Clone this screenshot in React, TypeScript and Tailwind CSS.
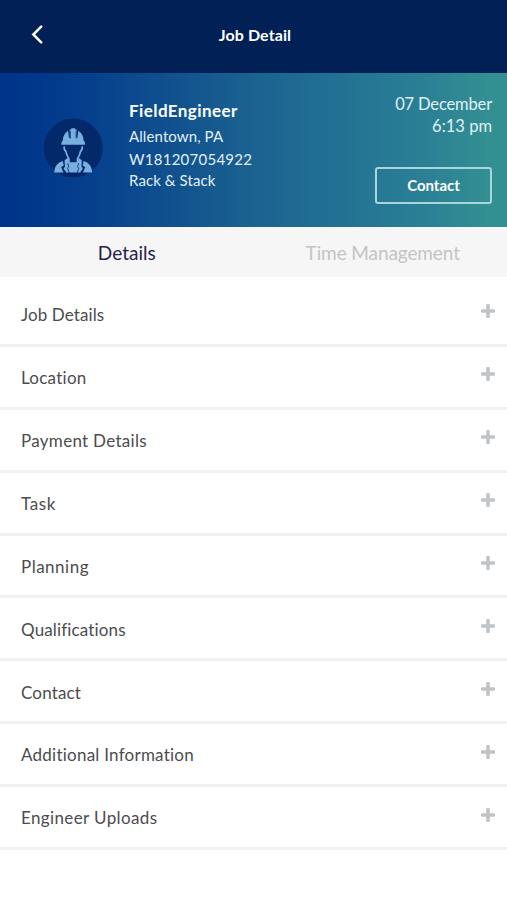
import React, { useState } from 'react';

const sections = [
  { title: 'Job Details', tracking: 'tracking-[0.1px]' },
  { title: 'Location', tracking: 'tracking-[0.25px]' },
  { title: 'Payment Details', tracking: 'tracking-[0.3px]' },
  { title: 'Task', tracking: 'tracking-[0.6px]' },
  { title: 'Planning', tracking: 'tracking-[0.5px]' },
  { title: 'Qualifications', tracking: 'tracking-[0.15px]' },
  { title: 'Contact', tracking: 'tracking-[0.15px]' },
  { title: 'Additional Information', tracking: 'tracking-[0.24px]' },
  { title: 'Engineer Uploads', tracking: 'tracking-[0.38px]' },
];

const EngineerAvatar: React.FC = () => (
  <svg className="size-[60px] shrink-0" viewBox="0 0 60 60" fill="none">
    <circle cx="30.200" cy="30" r="29.500" fill="#03296a" />
    {/* Helmet */}
    <g fill="#79afe0">
      <path d="M26.800 11.500V20h-.8l-.9-7.200c-3.300 1.900-5.100 5.200-5.300 9.700-1 .7-1.500 2-1.500 4.200h23.800c0-2.200-.5-3.500-1.500-4.200-.2-4.500-2-7.800-5.300-9.700l-.9 7.200h-.8v-8.500z" />
      <rect x="28" y="10.200" width="4.400" height="12.500" rx="1" />
    </g>
    <path d="M27.300 13v7.500M33.100 13v7.500" stroke="#03296a" strokeWidth="0.800" />
    {/* Face */}
    <path d="M21.200 28.300c-.3 2.500.3 4 1.600 4.900.5 2.900 1.600 5.300 3.100 7.600v3M39.200 28.300c.3 2.500-.3 4-1.600 4.900-.5 2.900-1.600 5.300-3.100 7.600v3" stroke="#79afe0" strokeWidth="1.700" />
    {/* Jacket and collar */}
    <g fill="#79afe0">
      <path d="M19.800 43c-5.200 1.700-8.300 5-8.500 11.500h9.200l-2.400-5.300 2.600-1.700z" />
      <path d="M40.600 43c5.200 1.700 8.300 5 8.500 11.500h-9.200l2.400-5.300-2.600-1.700z" />
      <path d="M24.300 40l2.700 4.200h6.400l2.700-4.200 2.800 2.500-.5 6 1.400 2-2.600 4h-14l-2.600-4 1.400-2-.5-6z" />
    </g>
    <path d="M24.700 45l1 3.500-1 2 1.600 4.500M35.700 45l-1 3.500 1 2-1.600 4.500" stroke="#03296a" strokeWidth="0.800" />
  </svg>
);

const PlusIcon: React.FC = () => (
  <svg className="size-3.5" viewBox="0 0 14 14" fill="#c0c4c6">
    <path d="M5.200 1q0-1 1-1h1.600q1 0 1 1v4.200H13q1 0 1 1v1.600q0 1-1 1H8.800V13q0 1-1 1H6.200q-1 0-1-1V8.800H1q-1 0-1-1V6.200q0-1 1-1h4.200z" />
  </svg>
);

const App: React.FC = () => {
  const [activeTab, setActiveTab] = useState('details');

  return (
    <div className="min-h-screen bg-white font-['Lato','Noto_Sans',sans-serif]">
      {/* Header */}
      <header className="grid h-[73px] grid-cols-[1fr_auto_1fr] items-center bg-[#002056] pb-1 pl-[31px] text-white">
        <button aria-label="Back" className="w-3">
          <svg className="h-[19px] w-3" viewBox="0 0 12 19" fill="none" stroke="currentColor" strokeWidth="2.500" strokeLinecap="round">
            <path d="M10.200 1.700L2.300 9.500l7.900 7.800" />
          </svg>
        </button>
        <h1 className="mr-[28px] text-base leading-5 font-bold tracking-[0.1px]">Job Detail</h1>
      </header>

      {/* Job summary */}
      <div className="flex h-[154px] bg-[linear-gradient(to_right,#00348a_2%,#053f8d_17%,#10508e_33%,#1b6290_50%,#237294_68%,#2b8095_84%,#328f92_96%)] pr-[15px] pl-[43px] text-[#e1f0f8]">
        <div className="pt-[45px]">
          <EngineerAvatar />
        </div>
        <div className="ml-[26px] flex-1 pt-[26px]">
          <h2 className="text-[17px] leading-6 font-bold tracking-[0.42px] text-white">FieldEngineer</h2>
          <p className="mt-0.5 text-[15px] leading-[23px] tracking-[0.1px]">Allentown, PA</p>
          <p className="text-[15px] leading-[22px] tracking-[0.25px]">W181207054922</p>
          <p className="text-[15px] leading-5 tracking-[0.1px]">Rack &amp; Stack</p>
        </div>
        <div className="flex flex-col items-end pt-5">
          <p className="text-[16.5px] leading-[22px] tracking-[-0.15px]">07 December</p>
          <p className="text-[16.5px] leading-[22px]">6:13 pm</p>
          <button className="mt-[30px] h-[37px] w-[117px] rounded-[3px] border-2 border-[#a9d5dc] text-[15px] font-bold text-white">
            Contact
          </button>
        </div>
      </div>

      {/* Tabs */}
      <div className="grid h-[50px] grid-cols-2 bg-[#f6f6f6] pt-0.5 text-[19px]">
        <button onClick={() => setActiveTab('details')} className={activeTab === 'details' ? 'text-[#26214f]' : 'text-[#c4c4c6]'}>
          Details
        </button>
        <button onClick={() => setActiveTab('time')} className={`pl-[5px] tracking-[-0.1px] ${activeTab === 'time' ? 'text-[#26214f]' : 'text-[#c4c4c6]'}`}>
          Time Management
        </button>
      </div>

      {/* Sections */}
      <div className="pt-[7px]">
        {sections.map((section) => (
          <button
            key={section.title}
            className="flex h-[62.9px] w-full items-center justify-between border-b-3 border-[#f1f1f1] pr-3 pl-[21px] text-[17px] text-[#4c4c4e]"
          >
            <span className={`pt-0.5 ${section.tracking}`}>{section.title}</span>
            <span className="pb-[5px]">
              <PlusIcon />
            </span>
          </button>
        ))}
      </div>
    </div>
  );
};

export default App;
